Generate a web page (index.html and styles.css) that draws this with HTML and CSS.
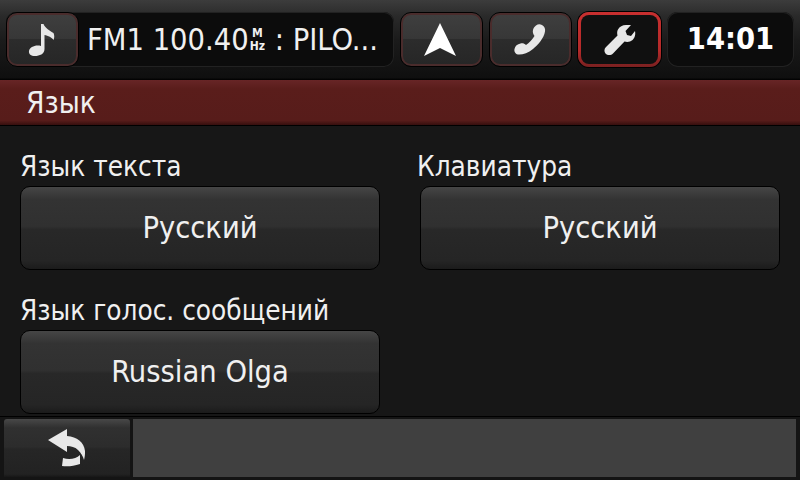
FILE: index.html
```html
<!DOCTYPE html>
<html lang="en">
  <head>
    <meta charset="UTF-8" />
    <meta name="viewport" content="width=device-width, initial-scale=1.0" />
    <title>Язык</title>
    <link rel="stylesheet" href="styles.css">
  </head>
  <body>
    <header class="topbar">
      <div class="media">
        <button class="tab tab-music">
          <svg width="30" height="34" viewBox="0 0 30 34"><path d="M13 1 L15.500 1 C17 5 22 8 25.500 10 C26.500 12 26.500 15 25.500 17 C24 14.500 20 12.500 16.500 12 L16.500 26 C16.500 31 11.500 33 7 33 C3 33 0.500 31 1 28 C1.800 24 7.500 21.500 13 23 Z" fill="#e8e8e8"/></svg>
        </button>
        <div class="station">FM1 100.40<span class="unit">M<br>Hz</span><span class="station-name"> : PILO...</span></div>
      </div>
      <button class="tab tab-nav">
        <svg width="34" height="34" viewBox="0 0 34 34"><path d="M17 0 L33 33 L17 25 L1 33 Z" fill="#fff"/></svg>
      </button>
      <button class="tab tab-phone">
        <svg width="32" height="32" viewBox="0 0 32 32"><path d="M22 1.500 C24 0 26 0 28 1 C30.500 2.500 31.500 4.500 31 7.500 C30 14 24 21 19 25 C14 29 8 31 4 30.500 C1 30 0 27 0.500 25 C1 22 3.500 20 6.500 19.500 C8.500 19 10.500 19.500 12 21 C15 19 18.500 15.500 20.500 12 C19 10 18.500 8 19 6 C19.300 4.500 20.500 2.500 22 1.500 Z" fill="#e8e8e8"/></svg>
      </button>
      <button class="tab tab-active">
        <svg width="32" height="32" viewBox="0 0 32 32"><path d="M22 1 L27 1 L21.500 7 L23 11 L27 12 L31 7 C32 12 30 16 26 17.500 C24 18.200 22 18 20.500 17.500 L9 29.500 C7 31.500 3.500 31.500 1.500 29.500 C0 27.500 0 25 2 23 L13.500 11.500 C13 9.500 13 7 14 5.500 C15.500 2.500 18.500 1 22 1 Z" fill="#e8e8e8"/></svg>
      </button>
      <div class="clock">14:01</div>
    </header>

    <h1 class="title">Язык</h1>

    <main class="settings">
      <div class="field">
        <label class="field-label">Язык текста</label>
        <button class="select">Русский</button>
      </div>
      <div class="field">
        <label class="field-label label-keyboard">Клавиатура</label>
        <button class="select">Русский</button>
      </div>
      <div class="field">
        <label class="field-label">Язык голос. сообщений</label>
        <button class="select">Russian Olga</button>
      </div>
    </main>

    <footer class="bottombar">
      <button class="back">
        <svg width="40" height="38" viewBox="0 0 40 38"><path d="M20 0 L20 7 C30 8 37 13 38 22 C38.300 25 37.500 29 37 31 C36 27 34 24 31 21 C28 18 24 17 20 17 L20 23 L1 11 Z M33 26 L33 35 C26 37.500 20 37.500 15 37 L16 29 C22 31 29 30 33 26 Z" fill="#e8e8e8"/></svg>
      </button>
      <div class="status"></div>
    </footer>
  </body>
</html>
```

FILE: styles.css
```css
html, body {
  margin: 0;
  height: 100%;
}
body {
  width: 800px;
  height: 480px;
  overflow: hidden;
  display: flex;
  flex-direction: column;
  background-color: #171717;
  color: #f0f0f0;
  font-family: "DejaVu Sans Condensed", "DejaVu Sans", sans-serif;
  font-stretch: condensed;
}
button {
  font-family: inherit;
  font-stretch: inherit;
  color: inherit;
  padding: 0;
  cursor: pointer;
}

/* top bar */
.topbar {
  height: 80px;
  box-sizing: border-box;
  padding: 12px 5px 13px 6px;
  display: flex;
  gap: 6px;
  background: linear-gradient(#3c3c3c, #2a2a2a 20%, #1b1b1b 50%, #0f0f0f 97%, #000);
}
.media {
  width: 388px;
  display: flex;
  align-items: center;
  background-color: #0c0c0c;
  border-radius: 10px;
  box-shadow: inset 0 0 0 1px #222;
}
.tab {
  width: 83px;
  height: 55px;
  flex: none;
  display: flex;
  align-items: center;
  justify-content: center;
  box-sizing: border-box;
  border: 1px solid #000;
  border-radius: 11px;
  background: linear-gradient(#3f3f3f, #373737 48%, #2c2c2c 50%, #262626);
  box-shadow: inset 0 0 0 2px #4a2c2c;
}
.tab-music {
  width: 73px;
}
.tab-nav svg {
  margin-right: 4px;
}
.tab-phone svg {
  margin-right: 2px;
}
.tab-active {
  border: 3px solid transparent;
  background: linear-gradient(#101010, #101010) padding-box, linear-gradient(#c82f2f, #b42a2a 70%, #7a2020) border-box;
  box-shadow: 0 0 0 1px #000;
}
.station {
  margin-left: 8px;
  font-size: 30.500px;
  line-height: 55px;
  white-space: nowrap;
  display: flex;
  align-items: center;
}
.unit {
  font-size: 12px;
  line-height: 13px;
  font-weight: bold;
  text-align: center;
  margin: 0 1px;
}
.station-name {
  white-space: pre;
}
.clock {
  width: 127px;
  height: 55px;
  box-sizing: border-box;
  background-color: #0c0c0c;
  border-radius: 11px;
  box-shadow: inset 0 0 0 1px #222;
  font-size: 30.500px;
  font-weight: bold;
  color: #fff;
  text-align: center;
  line-height: 53px;
}

/* page title */
.title {
  margin: 0;
  height: 46px;
  box-sizing: border-box;
  padding-left: 26px;
  font-size: 29.600px;
  font-weight: normal;
  line-height: 46px;
  background: linear-gradient(#672526, #5a1d1b 20%, #571c1a 90%, #360f0e);
  border-bottom: 1px solid #000;
}

/* settings grid */
.settings {
  flex: 1;
  box-sizing: border-box;
  padding: 26px 20px 0;
  display: grid;
  grid-template-columns: 360px 360px;
  grid-auto-rows: 118px;
  column-gap: 40px;
  row-gap: 26px;
  align-content: start;
}
.field {
  display: flex;
  flex-direction: column;
  height: 118px;
}
.field-label {
  height: 34px;
  font-size: 27.700px;
  line-height: 29px;
  white-space: nowrap;
}
.label-keyboard {
  margin-left: -3px;
}
.select {
  height: 84px;
  flex: none;
  box-sizing: border-box;
  padding-bottom: 2px;
  border: 1px solid #000;
  border-radius: 10px;
  background: linear-gradient(#464646, #333 15%, #303030 48%, #282828 52%, #252525 90%, #1b1b1b);
  font-size: 30.500px;
}

/* bottom bar */
.bottombar {
  height: 64px;
  box-sizing: border-box;
  padding: 2px 4px 3px;
  display: flex;
  gap: 3px;
  border-top: 1px solid #000;
  background-color: #141414;
}
.back {
  width: 126px;
  flex: none;
  display: flex;
  align-items: center;
  justify-content: center;
  border: none;
  border-radius: 3px 3px 0 0;
  background: linear-gradient(#484848, #303030 15%, #2c2c2c 48%, #262626 52%, #222 95%, #171717);
}
.status {
  flex: 1;
  background-color: #404040;
}
```
